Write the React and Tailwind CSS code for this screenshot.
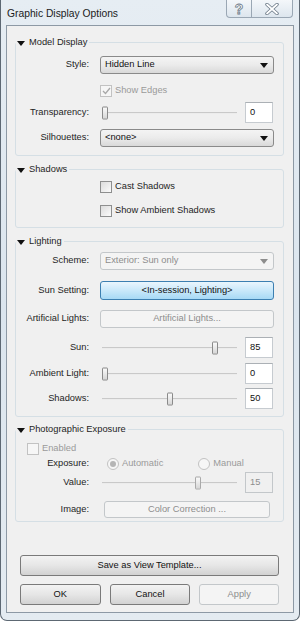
import React from 'react';

const labelCls = 'w-[73px] shrink-0 text-right text-[#1e1e1e]';

function Group({ title, className = '', children }) {
  return (
    <fieldset className={`mx-[8px] mr-[9px] rounded-[3px] border border-[#d5dfe5] ${className}`}>
      <legend className="flex h-[14px] items-center pr-[2px] leading-[14px] text-[#1e1e1e]">
        <svg width="8" height="5" viewBox="0 0 8 5" className="ml-[1px] mr-[4px] mt-[2px]">
          <path d="M0 0 L8 0 L4 5 Z" fill="#111" />
        </svg>
        {title}
      </legend>
      {children}
    </fieldset>
  );
}

function Row({ label, className = '', children, labelClass = labelCls }) {
  return (
    <div className={`flex items-center ${className}`}>
      <div className={labelClass}>{label}</div>
      {children}
    </div>
  );
}

function Dropdown({ value, disabled }) {
  return (
    <div
      className={`ml-[11px] flex h-full w-[174px] items-center justify-between rounded-[3px] border pl-[4px] pr-[5px] ${
        disabled
          ? 'border-[#c3c7ca] bg-[#f4f4f4] text-[#8d8d8d]'
          : 'border-[#8a8a8a] bg-gradient-to-b from-[#f4f4f4] via-[#ebebeb] to-[#d9d9d9] text-[#111] font-medium'
      }`}
    >
      <span>{value}</span>
      <svg width="8" height="5" viewBox="0 0 8 5">
        <path d="M0 0 L8 0 L4 5 Z" fill={disabled ? '#8d8d8d' : '#111'} />
      </svg>
    </div>
  );
}

function Slider({ pct, disabled }) {
  return (
    <div className="relative ml-[13px] h-full w-[135px]">
      <div className="absolute left-0 right-0 top-1/2 h-[2px] -translate-y-1/2 border-t border-[#c9c9c9] bg-[#ececec]" />
      <div
        className={`absolute top-1/2 h-[13px] w-[6px] -translate-y-1/2 rounded-[1px] border ${
          disabled ? 'border-[#a9a9a9]' : 'border-[#8a8a8a]'
        } bg-gradient-to-b from-[#fafafa] to-[#d6d6d6]`}
        style={{ left: `${(pct / 100) * 129}px` }}
      />
    </div>
  );
}

function NumBox({ value, disabled }) {
  return (
    <div
      className={`ml-[8px] flex h-full w-[28px] items-center border pl-[4px] ${
        disabled
          ? 'border-[#c3c7ca] bg-[#f0f0f0] text-[#8d8d8d]'
          : 'border-[#c6cbd0] border-t-[#abb0b5] bg-white text-[#111]'
      }`}
    >
      {value}
    </div>
  );
}

function Check({ label, checked, disabled, className = '' }) {
  return (
    <div className={`flex h-[13px] items-center ${className}`}>
      <div
        className={`flex h-[12px] w-[12px] items-center justify-center border ${
          disabled ? 'border-[#c2c2c2] bg-[#f6f6f6]' : 'border-[#8e8f8f] bg-gradient-to-br from-[#dcdcdc] to-[#fbfbfb]'
        }`}
      >
        {checked && (
          <svg width="9" height="8" viewBox="0 0 9 8">
            <path d="M1 4 L3.5 6.5 L8 1" stroke="#a8a8a8" strokeWidth="1.3" fill="none" />
          </svg>
        )}
      </div>
      <span className={`ml-[3px] ${disabled ? 'text-[#9a9a9a]' : 'text-[#1e1e1e]'}`}>{label}</span>
    </div>
  );
}

function Radio({ label, checked, className = '' }) {
  return (
    <div className={`flex items-center ${className}`}>
      <div className="flex h-[12px] w-[12px] items-center justify-center rounded-full border border-[#c2c2c2] bg-[#f6f6f6]">
        {checked && <div className="h-[6px] w-[6px] rounded-full bg-[#b5b5b5]" />}
      </div>
      <span className="ml-[3px] text-[#9a9a9a]">{label}</span>
    </div>
  );
}

function Button({ children, className = '', disabled }) {
  return (
    <div
      className={`flex items-center justify-center rounded-[3px] border ${
        disabled
          ? 'border-[#c3c7ca] bg-[#f4f4f4] text-[#8d8d8d]'
          : 'border-[#7a7a7a] bg-gradient-to-b from-[#f3f3f3] via-[#e6e6e6] to-[#d2d2d2] text-[#111]'
      } ${className}`}
    >
      {children}
    </div>
  );
}

export default function App() {
  return (
    <div className="flex h-[621px] w-[300px] flex-col rounded-b-[7px] border-x border-b border-[#5d6873] bg-gradient-to-b from-[#e6edf3] via-[#dbe5ee] to-[#e4ebf1] font-['Liberation_Sans',Arial,sans-serif] text-[9.3px] leading-none">
      {/* Title bar */}
      <div className="flex h-[25px] shrink-0 items-start">
        <div className="ml-[6px] mt-[9px] text-[10.3px] text-[#1b1b1b]">Graphic Display Options</div>
        <div className="ml-auto mr-[6px] flex h-[18px]">
          <div className="flex w-[26px] items-center justify-center rounded-bl-[4px] border border-t-0 border-[#9aa7b4] bg-gradient-to-b from-[#f4f7fa] to-[#dde6ee] text-[14px] font-bold text-white [-webkit-text-stroke:0.8px_#6a7886]">
            ?
          </div>
          <div className="flex w-[41px] items-center justify-center rounded-br-[4px] border border-l-0 border-t-0 border-[#9aa7b4] bg-gradient-to-b from-[#f4f7fa] to-[#dde6ee]">
            <svg width="14" height="12" viewBox="0 0 14 12">
              <path d="M2 1.5 L12 10.5 M12 1.5 L2 10.5" stroke="#6a7886" strokeWidth="3.4" strokeLinecap="round" />
              <path d="M2 1.5 L12 10.5 M12 1.5 L2 10.5" stroke="#ffffff" strokeWidth="1.8" strokeLinecap="round" />
            </svg>
          </div>
        </div>
      </div>

      {/* Client area */}
      <div className="mx-[5px] mr-[5px] flex h-[588px] flex-col border border-[#8d99a5] bg-[#f0f0f0]">
        <Group title="Model Display" className="mt-[9px] pb-[8px]">
          <Row label="Style:" className="mt-[7px] h-[18px]">
            <Dropdown value="Hidden Line" />
          </Row>
          <Check label="Show Edges" checked disabled className="ml-[84px] mt-[10px]" />
          <Row label="Transparency:" className="mt-[5px] h-[21px]">
            <Slider pct={0} />
            <NumBox value="0" />
          </Row>
          <Row label="Silhouettes:" className="mt-[6px] h-[18px]">
            <Dropdown value="<none>" />
          </Row>
        </Group>

        <Group title="Shadows" className="mt-[6px] pb-[10px]">
          <Check label="Cast Shadows" className="ml-[84px] mt-[4px]" />
          <Check label="Show Ambient Shadows" className="ml-[84px] mt-[11px]" />
        </Group>

        <Group title="Lighting" className="mt-[6px] pb-[7px]">
          <Row label="Scheme:" className="mt-[4px] h-[18px]">
            <Dropdown value="Exterior: Sun only" disabled />
          </Row>
          <Row label="Sun Setting:" className="mt-[11px] h-[19px]">
            <div className="ml-[11px] flex h-full w-[174px] items-center justify-center rounded-[3px] border border-[#3c7fb1] bg-gradient-to-b from-[#eaf6fd] via-[#c9e8fa] to-[#a7d9f5] text-[#111]">
              &lt;In-session, Lighting&gt;
            </div>
          </Row>
          <Row label="Artificial Lights:" className="mt-[10px] h-[18px]">
            <Button disabled className="ml-[11px] h-full w-[174px]">
              Artificial Lights...
            </Button>
          </Row>
          <Row label="Sun:" className="mt-[9px] h-[21px]">
            <Slider pct={85} />
            <NumBox value="85" />
          </Row>
          <Row label="Ambient Light:" className="mt-[5px] h-[21px]">
            <Slider pct={0} />
            <NumBox value="0" />
          </Row>
          <Row label="Shadows:" className="mt-[4px] h-[21px]">
            <Slider pct={50} />
            <NumBox value="50" />
          </Row>
        </Group>

        <Group title="Photographic Exposure" className="mt-[5px] pb-[3px]">
          <Check label="Enabled" disabled className="ml-[11px] mt-[6px]" />
          <Row label="Exposure:" className="mt-[3px] h-[12px]">
            <Radio label="Automatic" checked className="ml-[18px]" />
            <Radio label="Manual" className="ml-[35px]" />
          </Row>
          <Row label="Value:" className="mt-[2px] h-[21px]">
            <Slider pct={72} disabled />
            <NumBox value="15" disabled />
          </Row>
          <Row label="Image:" className="mt-[8px] h-[17px]">
            <Button disabled className="ml-[15px] h-full w-[166px]">
              Color Correction ...
            </Button>
          </Row>
        </Group>

        <div className="mt-auto flex flex-col px-[13px] pb-[7px] pr-[14px]">
          <Button className="h-[21px]">Save as View Template...</Button>
          <div className="mt-[8px] flex h-[21px] gap-[9px]">
            <Button className="w-[81px]">OK</Button>
            <Button className="w-[81px]">Cancel</Button>
            <Button disabled className="w-[80px]">
              Apply
            </Button>
          </div>
        </div>
      </div>
    </div>
  );
}
